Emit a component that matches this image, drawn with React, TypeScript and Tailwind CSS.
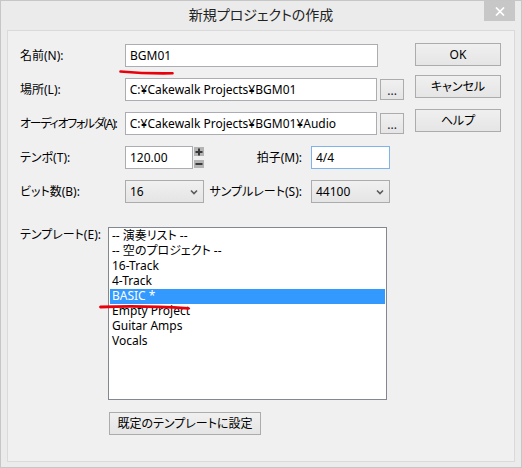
import React from "react";

const FONT = "font-['Noto_Sans','Noto_Sans_CJK_JP',sans-serif] [font-feature-settings:'palt']";

function Btn({ children, className = "" }: { children: React.ReactNode; className?: string }) {
  return (
    <div
      className={
        "flex items-center justify-center border border-[#acacac] bg-linear-to-b from-[#f0f0f0] to-[#e5e5e5] text-[12px] text-black " +
        className
      }
    >
      {children}
    </div>
  );
}

function Field({ value, className = "", focused = false }: { value: string; className?: string; focused?: boolean }) {
  return (
    <div
      className={
        "flex h-[23px] items-center whitespace-nowrap bg-white pl-[4px] text-[12px] text-black " +
        (focused ? "border border-[#7eb4ea] " : "border border-[#abadb3] ") +
        className
      }
    >
      {value}
    </div>
  );
}

function Combo({ value }: { value: string }) {
  return (
    <div className="flex h-[23px] w-[79px] items-center justify-between border border-[#acacac] bg-linear-to-b from-[#f0f0f0] to-[#e5e5e5] pl-[4px] pr-[5px] text-[12px] text-black">
      <span>{value}</span>
      <svg width="8" height="6" viewBox="0 0 8 6">
        <polyline points="1,1.5 4,4.5 7,1.5" fill="none" stroke="#5a5a5a" strokeWidth="1.6" />
      </svg>
    </div>
  );
}

function Dots() {
  return (
    <div className="ml-[3px] flex h-[21px] w-[24px] items-center justify-center border border-[#acacac] bg-linear-to-b from-[#f0f0f0] to-[#e5e5e5] pt-[2px] text-[12px] leading-none text-[#1a2030]">
      ...
    </div>
  );
}

const items = [
  "-- 演奏リスト --",
  "-- 空のプロジェクト --",
  "16-Track",
  "4-Track",
  "BASIC *",
  "Empty Project",
  "Guitar Amps",
  "Vocals",
];

export default function App() {
  return (
    <div className={"relative flex h-[468px] w-[522px] flex-col border border-[#c6c6c6] bg-[#ebebeb] text-black " + FONT}>
      {/* title bar */}
      <div className="flex h-[29px] items-start justify-center pt-[5px] text-[14px] leading-[18px] text-[#222]">
        新規プロジェクトの作成
      </div>
      <div className="absolute right-[6px] top-0 flex h-[20px] w-[31px] items-center justify-center bg-[#c7c7c7]">
        <svg width="10" height="9" viewBox="0 0 10 9">
          <line x1="1" y1="0.5" x2="9" y2="8.5" stroke="#fff" strokeWidth="1.7" />
          <line x1="9" y1="0.5" x2="1" y2="8.5" stroke="#fff" strokeWidth="1.7" />
        </svg>
      </div>

      {/* client area */}
      <div className="mx-[6px] mb-[5px] flex flex-1 flex-col border border-[#dadada] bg-[#f0f0f0] text-[12px]">
        <div className="flex pl-[12px]">
          {/* form */}
          <div className="flex w-[384px] flex-col gap-[11px] pt-[13px]">
            <div className="flex h-[23px] items-center">
              <div className="w-[105px] whitespace-nowrap">名前(N):</div>
              <Field value="BGM01" className="w-[253px]" />
            </div>
            <div className="flex h-[23px] items-center">
              <div className="w-[105px] whitespace-nowrap">場所(L):</div>
              <Field value="C:¥Cakewalk Projects¥BGM01" className="w-[253px]" />
              <Dots />
            </div>
            <div className="flex h-[23px] items-center">
              <div className="w-[105px] whitespace-nowrap tracking-[-1.3px]">オーディオフォルダ(A):</div>
              <Field value="C:¥Cakewalk Projects¥BGM01¥Audio" className="w-[253px]" />
              <Dots />
            </div>
            <div className="flex h-[23px] items-center">
              <div className="w-[105px] whitespace-nowrap">テンポ(T):</div>
              <Field value="120.00" className="w-[68px]" />
              <div className="ml-[1px] flex h-[23px] w-[10px] flex-col justify-center gap-[4px]">
                <div className="flex h-[9px] w-[10px] items-center justify-center bg-[#b4b4b4]">
                  <svg width="8" height="8" viewBox="0 0 8 8">
                    <rect x="0.5" y="3" width="7" height="2" fill="#3a3a3a" />
                    <rect x="3" y="0.5" width="2" height="7" fill="#3a3a3a" />
                  </svg>
                </div>
                <div className="flex h-[8px] w-[10px] items-center justify-center bg-[#b4b4b4]">
                  <svg width="8" height="8" viewBox="0 0 8 8">
                    <rect x="0.5" y="3" width="7" height="2" fill="#3a3a3a" />
                  </svg>
                </div>
              </div>
              <div className="w-[107px] whitespace-nowrap pr-[9px] text-right">拍子(M):</div>
              <Field value="4/4" className="w-[79px]" focused />
            </div>
            <div className="flex h-[23px] items-center">
              <div className="w-[105px] whitespace-nowrap">ビット数(B):</div>
              <Combo value="16" />
              <div className="w-[107px] whitespace-nowrap pr-[9px] text-right">サンプルレート(S):</div>
              <Combo value="44100" />
            </div>
          </div>
          {/* buttons */}
          <div className="ml-[11px] flex w-[86px] flex-col pt-[12px]">
            <Btn className="h-[23px]">OK</Btn>
            <Btn className="mt-[9px] h-[23px]">キャンセル</Btn>
            <Btn className="mt-[11px] h-[23px]">ヘルプ</Btn>
          </div>
        </div>

        {/* template */}
        <div className="mt-[24px] flex pl-[12px]">
          <div className="w-[88px] whitespace-nowrap leading-[15px]">テンプレート(E):</div>
          <div className="flex h-[173px] w-[279px] flex-col overflow-hidden border border-[#828790] bg-white p-[1px]">
            {items.map((t) => (
              <div
                key={t}
                className={
                  "h-[15px] shrink-0 whitespace-nowrap pl-[2px] leading-[14px] " +
                  (t === "BASIC *" ? "bg-[#3399ff] text-white" : "text-black")
                }
              >
                {t}
              </div>
            ))}
          </div>
        </div>
        <div className="ml-[101px] mt-[12px] flex">
          <Btn className="h-[23px] w-[152px]">既定のテンプレートに設定</Btn>
        </div>
      </div>

      {/* red annotation marks */}
      <svg
        className="pointer-events-none absolute left-[-1px] top-[-1px]"
        width="522"
        height="468"
        viewBox="0 0 522 468"
      >
        <path d="M120.5 71.5 Q 146 73.8 172.5 73.3" fill="none" stroke="#e8000b" strokeWidth="2.6" strokeLinecap="round" />
        <path d="M100.5 307 Q 140 305.2 188.5 308.3" fill="none" stroke="#e8000b" strokeWidth="2.8" strokeLinecap="round" />
      </svg>
    </div>
  );
}
